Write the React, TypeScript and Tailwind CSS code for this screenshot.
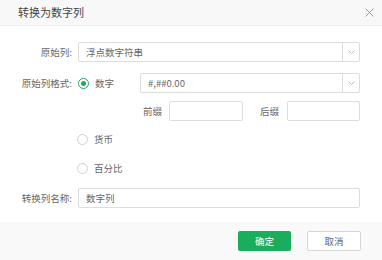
import React from "react";

const font = { fontFamily: '"Noto Sans CJK SC", "Liberation Sans", sans-serif' };

function Radio({ checked, label }: { checked?: boolean; label: string }) {
  return (
    <div className="flex items-center gap-[6px]">
      <span
        className={`flex h-[11px] w-[11px] items-center justify-center rounded-full border bg-white ${
          checked ? "border-[#1aad5d]" : "border-[#d0d0d0]"
        }`}
      >
        {checked && <span className="h-[5px] w-[5px] rounded-full bg-[#1aad5d]" />}
      </span>
      <span className="text-[9.5px] text-[#666]">{label}</span>
    </div>
  );
}

function Chevron() {
  return (
    <svg width="7" height="4" viewBox="0 0 7 4" fill="none">
      <path d="M0.5 0.5 L3.5 3.5 L6.5 0.5" stroke="#c0c0c0" strokeWidth="1" />
    </svg>
  );
}

function Select({ value, className = "" }: { value: string; className?: string }) {
  return (
    <div className={`flex h-[20px] items-stretch rounded-[2px] border border-[#dcdcdc] bg-white ${className}`}>
      <div className="flex flex-1 items-center px-[7px] text-[9.5px] text-[#666]">{value}</div>
      <div className="flex w-[17px] items-center justify-center border-l border-[#dcdcdc]">
        <Chevron />
      </div>
    </div>
  );
}

export default function App() {
  return (
    <div className="flex h-[260px] w-[382px] flex-col bg-white" style={font}>
      {/* Header */}
      <div className="flex h-[26px] shrink-0 items-center justify-between border-b border-[#ededed] bg-[#f8f8f8] pl-[18px] pr-[8px]">
        <span className="text-[11px] text-[#444]">转换为数字列</span>
        <svg width="9" height="9" viewBox="0 0 9 9" fill="none">
          <path d="M0.5 0.5 L8.5 8.5 M8.5 0.5 L0.5 8.5" stroke="#909090" strokeWidth="0.9" />
        </svg>
      </div>

      {/* Body */}
      <div className="flex flex-1 flex-col pr-[22px] pt-[16px]">
        <div className="flex h-[20px] items-center">
          <div className="w-[73px] pr-[1px] text-right text-[9.5px] text-[#666]">原始列:</div>
          <Select value="浮点数字符串" className="ml-[5px] flex-1" />
        </div>

        <div className="mt-[11px] flex h-[20px] items-center">
          <div className="w-[73px] pr-[1px] text-right text-[9.5px] text-[#666]">原始列格式:</div>
          <div className="ml-[5px] w-[62px]">
            <Radio checked label="数字" />
          </div>
          <Select value="#,##0.00" className="flex-1" />
        </div>

        <div className="mt-[8px] flex h-[20px] items-center">
          <div className="w-[143px]" />
          <span className="w-[26px] text-[9.5px] text-[#666]">前缀</span>
          <div className="h-[20px] w-[74px] rounded-[2px] border border-[#dcdcdc] bg-white" />
          <span className="ml-[17px] w-[27px] text-[9.5px] text-[#666]">后缀</span>
          <div className="h-[20px] flex-1 rounded-[2px] border border-[#dcdcdc] bg-white" />
        </div>

        <div className="ml-[77px] mt-[8px] flex h-[20px] items-center">
          <Radio label="货币" />
        </div>

        <div className="ml-[77px] mt-[9px] flex h-[20px] items-center">
          <Radio label="百分比" />
        </div>

        <div className="mt-[10px] flex h-[20px] items-center">
          <div className="w-[73px] pr-[1px] text-right text-[9.5px] text-[#666]">转换列名称:</div>
          <div className="ml-[5px] flex h-[20px] flex-1 items-center rounded-[2px] border border-[#dcdcdc] bg-white px-[7px] text-[9.5px] text-[#666]">
            数字列
          </div>
        </div>
      </div>

      {/* Footer */}
      <div className="flex h-[38px] shrink-0 items-center justify-end gap-[16px] bg-[#f9f9f9] pr-[21px]">
        <button className="h-[20px] w-[53px] rounded-[2px] bg-[#1aad5d] text-[9.5px] text-white">确定</button>
        <button className="h-[20px] w-[54px] rounded-[2px] border border-[#d6d6d6] bg-white text-[9.5px] text-[#666]">
          取消
        </button>
      </div>
    </div>
  );
}
